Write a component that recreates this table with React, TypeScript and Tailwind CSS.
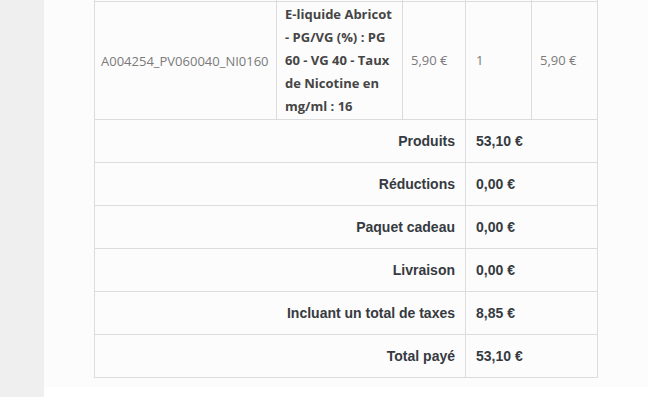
const totals = [
  { label: 'Produits', value: '53,10 €' },
  { label: 'Réductions', value: '0,00 €' },
  { label: 'Paquet cadeau', value: '0,00 €' },
  { label: 'Livraison', value: '0,00 €' },
  { label: 'Incluant un total de taxes', value: '8,85 €' },
  { label: 'Total payé', value: '53,10 €' },
]

export default function App() {
  return (
    <div className="flex h-[397px] w-[649px] overflow-hidden bg-white">
      <aside className="w-[44px] shrink-0 bg-[#efefef]" />
      <main className="flex w-[604px] flex-col">
        <section className="bg-[#fcfcfc] pb-[9px] pl-[50px]">
          <table className="w-[503px] table-fixed border-collapse font-['Open_Sans',sans-serif] text-[13px] text-[#7a7a7a]">
            <colgroup>
              <col className="w-[182px]" />
              <col className="w-[126px]" />
              <col className="w-[63px]" />
              <col className="w-[66px]" />
              <col className="w-[66px]" />
            </colgroup>
            <tbody>
              {/* tail of the header row, scrolled out of view */}
              <tr className="h-px">
                <td className="border-x border-[#dcdcdc] p-0" />
                <td className="border-x border-[#dcdcdc] p-0" />
                <td className="border-x border-[#dcdcdc] p-0" />
                <td className="border-x border-[#dcdcdc] p-0" />
                <td className="border-x border-[#dcdcdc] p-0" />
              </tr>
              <tr>
                <td className="whitespace-nowrap border border-[#dcdcdc] px-[6px] pt-[3px] pb-px align-middle leading-[23px]">
                  A004254_PV060040_NI0160
                </td>
                <td className="border border-[#dcdcdc] px-[8px] py-px align-middle font-bold leading-[23px] text-[#454545]">
                  E-liquide Abricot - PG/VG (%) : PG 60 - VG 40 - Taux de Nicotine en mg/ml : 16
                </td>
                <td className="border border-[#dcdcdc] px-[8px] pt-[2px] align-middle">5,90 €</td>
                <td className="border border-[#dcdcdc] px-[10px] pt-[2px] align-middle">1</td>
                <td className="border border-[#dcdcdc] px-[8px] pt-[2px] align-middle">5,90 €</td>
              </tr>
              {totals.map((row) => (
                <tr key={row.label} className="h-[43px] font-['Liberation_Sans',Arial,sans-serif] text-[14px] font-bold text-[#363a41]">
                  <td colSpan={3} className="border border-[#dcdcdc] px-[10px] pt-[2px] text-right align-middle">
                    {row.label}
                  </td>
                  <td colSpan={2} className="border border-[#dcdcdc] px-[10px] pt-[2px] align-middle">
                    {row.value}
                  </td>
                </tr>
              ))}
            </tbody>
          </table>
        </section>
      </main>
    </div>
  )
}
